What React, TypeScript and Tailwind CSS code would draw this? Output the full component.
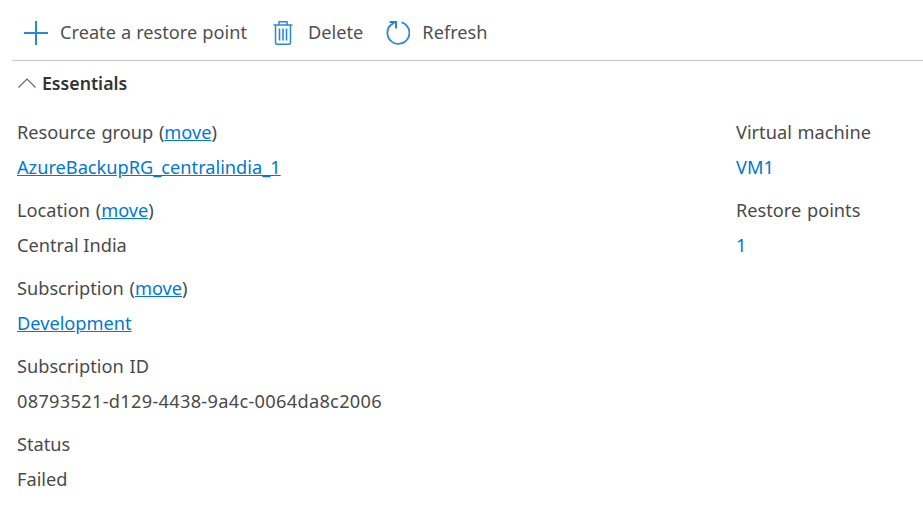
import React from "react";

const LINK = "text-[#0078d4]";

function PlusIcon() {
  return (
    <svg width="24" height="24" viewBox="0 0 24 24" fill="none" stroke="#2b88d8" strokeWidth="2">
      <path d="M12 0v24M0 12h24" />
    </svg>
  );
}

function TrashIcon() {
  return (
    <svg width="20" height="24" viewBox="0 0 20 24" fill="none" stroke="#2b88d8" strokeWidth="1.500">
      <path d="M0.500 4h19M6 4V0.800h8V4M2.500 4v17.500a1.800 1.800 0 0 0 1.800 1.800h11.400a1.800 1.800 0 0 0 1.800-1.800V4" />
      <path d="M6.500 7.500v12M10 7.500v12M13.500 7.500v12" strokeWidth="1.600" />
    </svg>
  );
}

function RefreshIcon() {
  return (
    <svg width="24" height="24" viewBox="0 0 24 24" fill="none" stroke="#2b88d8" strokeWidth="1.800">
      <path d="M15.500 1.300A11 11 0 1 1 4.500 4.200L9 1" />
      <path d="M3.500 1h6.500v6.500" strokeWidth="2" />
    </svg>
  );
}

function Field({ label, move, value, link, plainLink, spaced }: { label: string; move?: boolean; value: string; link?: boolean; plainLink?: boolean; spaced?: boolean }) {
  return (
    <div className="flex flex-col gap-[9px] mb-[17px]">
      <div className="h-[26px] leading-[26px] whitespace-nowrap [word-spacing:1px]">
        {label}
        {move && (
          <>
            {" ("}
            <a className={`${LINK} underline`}>move</a>
            {")"}
          </>
        )}
      </div>
      <div className={`h-[26px] leading-[26px] whitespace-nowrap ${link ? `${LINK} underline` : ""} ${plainLink ? LINK : ""} ${spaced ? "tracking-[0.3px]" : ""}`}>{value}</div>
    </div>
  );
}

export default function App() {
  return (
    <div className="w-[923px] h-[519px] overflow-hidden bg-white text-[18.2px] text-[#4a4a4a] font-['Noto_Sans','Open_Sans',sans-serif] pl-3">
      <div className="h-[61px] border-b border-[#c8c8c8] flex items-center pl-3 pt-[6px] text-[#505050]">
        <button className="flex items-center gap-3 [word-spacing:0.3px]">
          <PlusIcon />
          <span>Create a restore point</span>
        </button>
        <button className="flex items-center gap-[15px] ml-[26px]">
          <TrashIcon />
          <span>Delete</span>
        </button>
        <button className="flex items-center gap-3 ml-[23px]">
          <RefreshIcon />
          <span>Refresh</span>
        </button>
      </div>
      <div className="flex items-center gap-[6px] h-[44px] pl-[6px]">
        <svg width="18" height="10" viewBox="0 0 18 10" fill="none" stroke="#666" strokeWidth="1.200">
          <path d="M0.500 9.500L9 1l8.500 8.500" />
        </svg>
        <span className="font-semibold text-[17.7px] text-[#333]">Essentials</span>
      </div>
      <div className="flex pl-[5px] pt-[14px]">
        <div className="w-[719px]">
          <Field label="Resource group" move value="AzureBackupRG_centralindia_1" link />
          <Field label="Location" move value="Central India" />
          <Field label="Subscription" move value="Development" link />
          <Field label="Subscription ID" value="08793521-d129-4438-9a4c-0064da8c2006" spaced />
          <Field label="Status" value="Failed" />
        </div>
        <div>
          <Field label="Virtual machine" value="VM1" plainLink />
          <Field label="Restore points" value="1" plainLink />
        </div>
      </div>
    </div>
  );
}
